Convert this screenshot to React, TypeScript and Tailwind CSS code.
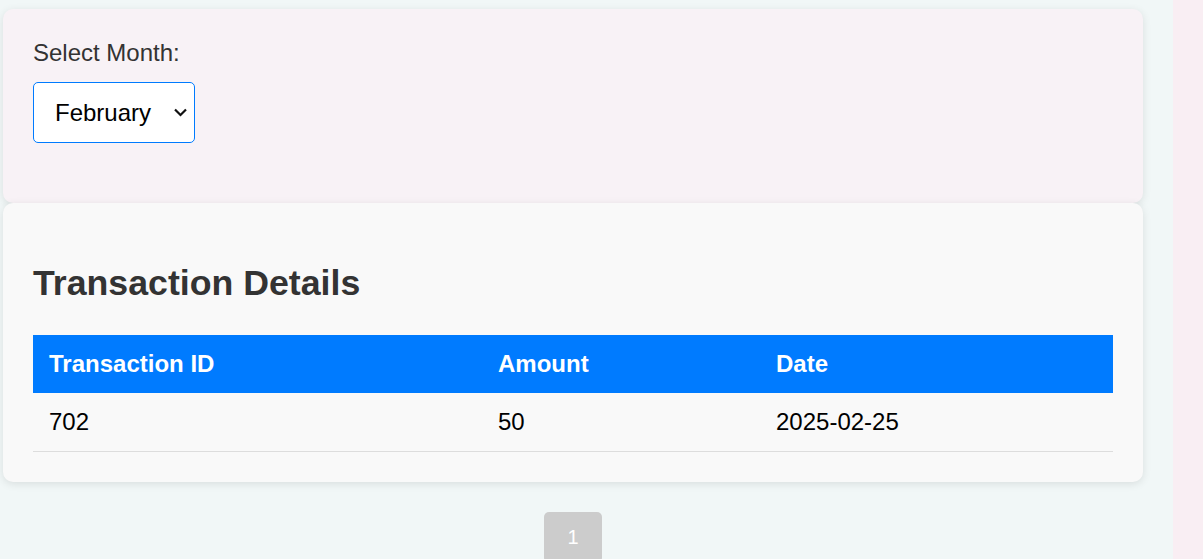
import { useState } from "react";

const months = [
  "January", "February", "March", "April", "May", "June",
  "July", "August", "September", "October", "November", "December",
];

const rows = [{ id: "702", amount: "50", date: "2025-02-25" }];

export default function App() {
  const [month, setMonth] = useState("February");

  return (
    <div className="flex min-h-screen bg-[#f1f7f7] font-['Liberation_Sans',Arial,sans-serif]">
      {/* Main column */}
      <div className="flex-1 pl-[3px] pr-[30px] pt-[9px]">
        {/* Month filter */}
        <div className="rounded-[10px] bg-[#f8f2f6] p-[30px] pb-[60px] shadow-[0_2px_8px_rgba(0,0,0,0.1)]">
          <label className="mb-[16px] block text-[24px] leading-[27px] text-[#333]">Select Month:</label>
          <div className="relative w-[162px]">
            <select
              value={month}
              onChange={(e) => setMonth(e.target.value)}
              className="h-[61px] w-[162px] appearance-none rounded-[5px] border border-[#007bff] bg-white pl-[21px] text-[24px] text-black outline-none"
            >
              {months.map((m) => (
                <option key={m} value={m}>{m}</option>
              ))}
            </select>
            <svg
              className="pointer-events-none absolute left-[141px] top-[26px]"
              width="13"
              height="9"
              viewBox="0 0 13 9"
              fill="none"
            >
              <path d="M1 1.5 L6.5 7 L12 1.5" stroke="#111" strokeWidth="2.2" />
            </svg>
          </div>
        </div>

        {/* Transactions */}
        <div className="rounded-[10px] bg-[#f9f9f9] px-[30px] pb-[30px] pt-[30px] shadow-[0_2px_8px_rgba(0,0,0,0.1)]">
          <h2 className="mt-[30px] mb-[31px] text-[35.7px] font-bold leading-[41px] text-[#333]">
            Transaction Details
          </h2>
          <table className="w-full border-collapse text-left text-[24px] leading-[28px]">
            <thead>
              <tr className="bg-[#007bff] text-white">
                <th className="w-[449px] px-[16px] py-[15px] font-bold">Transaction ID</th>
                <th className="w-[278px] px-[16px] py-[15px] font-bold">Amount</th>
                <th className="px-[16px] py-[15px] font-bold">Date</th>
              </tr>
            </thead>
            <tbody>
              {rows.map((r) => (
                <tr key={r.id} className="border-b border-[#ddd] text-black">
                  <td className="px-[16px] py-[15px]">{r.id}</td>
                  <td className="px-[16px] py-[15px]">{r.amount}</td>
                  <td className="px-[16px] py-[15px]">{r.date}</td>
                </tr>
              ))}
            </tbody>
          </table>
        </div>

        {/* Pagination */}
        <div className="mt-[30px] flex justify-center">
          <button className="rounded-[5px] bg-[#ccc] px-[23px] py-[14px] text-[20px] leading-[23px] text-white">
            1
          </button>
        </div>
      </div>

      {/* Right strip */}
      <div className="w-[30px] shrink-0 bg-[#f9eef3]" />
    </div>
  );
}
